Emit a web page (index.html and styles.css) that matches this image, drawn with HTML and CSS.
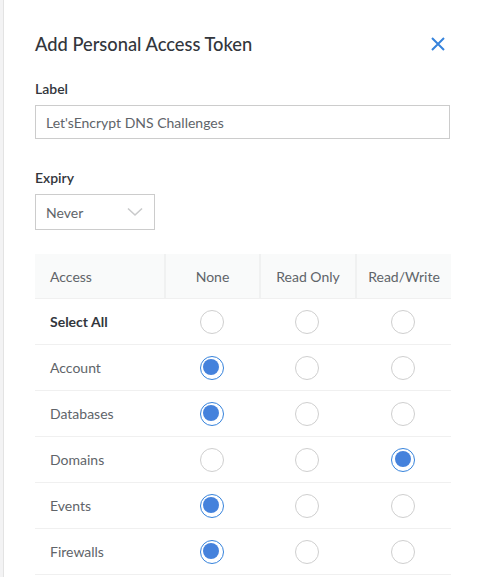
FILE: index.html
```html
<!DOCTYPE html>
<html>
<head>
<meta charset="utf-8">
<link rel="stylesheet" href="styles.css">
</head>
<body>
<div class="page">
  <div class="modal">
    <div class="head">
      <h1 class="title">Add Personal Access Token</h1>
      <button class="close" aria-label="Close">
        <svg width="14" height="14" viewBox="0 0 14 14"><path d="M1 1L13 13M13 1L1 13" stroke="#3683dc" stroke-width="2" fill="none"/></svg>
      </button>
    </div>
    <div class="field">
      <label class="lbl">Label</label>
      <div class="input">Let'sEncrypt DNS Challenges</div>
    </div>
    <div class="field expiry">
      <label class="lbl">Expiry</label>
      <div class="select">
        <span>Never</span>
        <svg width="16" height="10" viewBox="0 0 16 10"><path d="M1 1.5L8 8L15 1.5" stroke="#c9cacb" stroke-width="1.6" fill="none"/></svg>
      </div>
    </div>
    <div class="table">
      <div class="row header">
        <div class="cell name">Access</div>
        <div class="cell c">None</div>
        <div class="cell c">Read Only</div>
        <div class="cell c">Read/Write</div>
      </div>
      <div class="row">
        <div class="cell name strong">Select All</div>
        <div class="cell c"><span class="radio"></span></div>
        <div class="cell c"><span class="radio"></span></div>
        <div class="cell c"><span class="radio"></span></div>
      </div>
      <div class="row">
        <div class="cell name">Account</div>
        <div class="cell c"><span class="radio on"></span></div>
        <div class="cell c"><span class="radio"></span></div>
        <div class="cell c"><span class="radio"></span></div>
      </div>
      <div class="row">
        <div class="cell name">Databases</div>
        <div class="cell c"><span class="radio on"></span></div>
        <div class="cell c"><span class="radio"></span></div>
        <div class="cell c"><span class="radio"></span></div>
      </div>
      <div class="row">
        <div class="cell name">Domains</div>
        <div class="cell c"><span class="radio"></span></div>
        <div class="cell c"><span class="radio"></span></div>
        <div class="cell c"><span class="radio on"></span></div>
      </div>
      <div class="row">
        <div class="cell name">Events</div>
        <div class="cell c"><span class="radio on"></span></div>
        <div class="cell c"><span class="radio"></span></div>
        <div class="cell c"><span class="radio"></span></div>
      </div>
      <div class="row">
        <div class="cell name">Firewalls</div>
        <div class="cell c"><span class="radio on"></span></div>
        <div class="cell c"><span class="radio"></span></div>
        <div class="cell c"><span class="radio"></span></div>
      </div>
    </div>
  </div>
</div>
</body>
</html>
```

FILE: styles.css
```css
html, body {
  margin: 0;
  padding: 0;
  background: #f3f3f4;
  font-family: Lato, "Open Sans", sans-serif;
}
.page {
  padding-left: 4px;
  height: 577px;
  overflow: hidden;
}
.modal {
  background: #fff;
  height: 577px;
  box-shadow: -1px 0 0 #e3e3e3;
  padding: 0 0 0 31px;
  box-sizing: border-box;
}
.head {
  display: flex;
  align-items: center;
  justify-content: space-between;
  width: 410px;
  padding-top: 33px;
}
.title {
  margin: 0;
  font-size: 18.3px;
  font-weight: 500;
  color: #32363c;
  line-height: 22px;
}
.close {
  border: 0;
  background: none;
  padding: 0;
  width: 14px;
  height: 14px;
  display: flex;
}
.field {
  display: flex;
  flex-direction: column;
}
.lbl {
  font-size: 14px;
  color: #32363c;
  font-weight: 600;
  line-height: 18px;
  margin-top: 25px;
  margin-bottom: 7px;
}
.input {
  width: 415px;
  height: 34px;
  box-sizing: border-box;
  border: 1px solid #ccc;
  padding: 0 10px;
  font-size: 14px;
  color: #606469;
  display: flex;
  align-items: center;
}
.expiry .lbl {
  margin-top: 30px;
}
.select {
  width: 120px;
  height: 36px;
  box-sizing: border-box;
  border: 1px solid #ccc;
  padding: 0 11px 0 10px;
  display: flex;
  align-items: center;
  justify-content: space-between;
  font-size: 14px;
  color: #606469;
}
.table {
  margin-top: 24px;
  width: 416px;
}
.row {
  display: grid;
  grid-template-columns: 129px 95px 96px 96px;
  height: 46px;
  border-bottom: 1px solid #f0f0f0;
  box-sizing: border-box;
}
.row.header {
  background: #f9fafa;
  border-bottom: 1px solid #f0f0f0;
  height: 45px;
}
.header .cell + .cell {
  border-left: 2px solid #f0f1f1;
}
.cell {
  display: flex;
  align-items: center;
  font-size: 14px;
  color: #606469;
}
.cell.name {
  padding-left: 15px;
}
.cell.strong {
  font-weight: 700;
  color: #32363c;
}
.cell.c {
  justify-content: center;
}
.radio {
  width: 24px;
  height: 24px;
  box-sizing: border-box;
  border: 1px solid #cfcfcf;
  border-radius: 50%;
  display: block;
  position: relative;
}
.radio.on {
  border: 1.5px solid #3683dc;
}
.radio.on::after {
  content: "";
  position: absolute;
  left: 2.5px;
  top: 2.5px;
  width: 16px;
  height: 16px;
  border-radius: 50%;
  background: #4582dc;
}
```
